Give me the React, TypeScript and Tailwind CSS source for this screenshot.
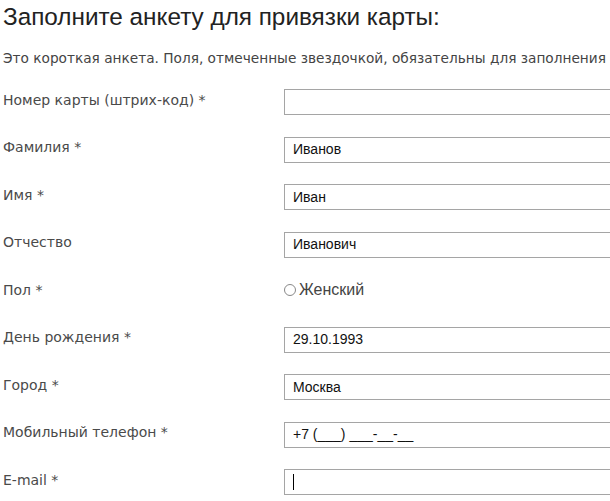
import React from "react";

const rows: { label: string; value?: string; kind?: "radio" | "caret" }[] = [
  { label: "Номер карты (штрих-код) *", value: "" },
  { label: "Фамилия *", value: "Иванов" },
  { label: "Имя *", value: "Иван" },
  { label: "Отчество", value: "Иванович" },
  { label: "Пол *", kind: "radio" },
  { label: "День рождения *", value: "29.10.1993" },
  { label: "Город *", value: "Москва" },
  { label: "Мобильный телефон *", value: "+7 (___) ___-__-__" },
  { label: "E-mail *", kind: "caret" },
];

export default function App() {
  return (
    <div className="w-[610px] h-[501px] overflow-hidden bg-white pl-[3px]">
      <h1
        className="pt-[3px] text-[24.3px] leading-[28px] text-[#222] whitespace-nowrap"
        style={{ fontFamily: '"Liberation Sans", Arial, sans-serif' }}
      >
        Заполните анкету для привязки карты:
      </h1>
      <p
        className="mt-[19px] text-[13.7px] leading-[16px] text-[#444] whitespace-nowrap"
        style={{ fontFamily: '"DejaVu Sans", Verdana, sans-serif' }}
      >
        Это короткая анкета. Поля, отмеченные звездочкой, обязательны для заполнения
      </p>
      <div className="mt-[23px] flex flex-col gap-[21.5px]">
        {rows.map((r) => (
          <div key={r.label} className="flex items-center h-[26px]">
            <div
              className="w-[281px] shrink-0 pb-[4px] text-[14px] text-[#4a4a4a] whitespace-nowrap"
              style={{ fontFamily: '"DejaVu Sans", Verdana, sans-serif' }}
            >
              {r.label}
            </div>
            {r.kind === "radio" ? (
              <div
                className="flex items-center gap-[3px] pb-[4px] text-[16px] text-[#444]"
                style={{ fontFamily: '"Liberation Sans", Arial, sans-serif' }}
              >
                <span className="shrink-0 inline-block w-[12px] h-[12px] rounded-full border border-[#888] bg-white" />
                <span>Женский</span>
              </div>
            ) : (
              <div
                className="w-[340px] shrink-0 h-[26px] border border-[#a5a5a5] bg-white flex items-center pl-[8px] text-[14px] text-[#111]"
                style={{ fontFamily: '"Liberation Sans", Arial, sans-serif' }}
              >
                {r.kind === "caret" ? (
                  <span className="inline-block w-[1px] h-[16px] bg-black" />
                ) : (
                  <span>{r.value}</span>
                )}
              </div>
            )}
          </div>
        ))}
      </div>
    </div>
  );
}
